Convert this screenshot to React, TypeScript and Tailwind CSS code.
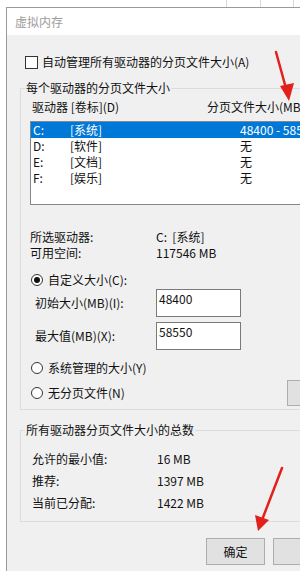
import React from 'react';

const font = { fontFamily: '"Noto Sans CJK SC", "Noto Sans", sans-serif' };

const drives = [
  { letter: 'C:', label: '[系统]', size: '48400 - 58550', selected: true },
  { letter: 'D:', label: '[软件]', size: '无', selected: false },
  { letter: 'E:', label: '[文档]', size: '无', selected: false },
  { letter: 'F:', label: '[娱乐]', size: '无', selected: false },
];

const Radio: React.FC<{ checked?: boolean }> = ({ checked }) => (
  <span className="w-[12px] h-[12px] rounded-full border border-[#333] bg-white flex items-center justify-center shrink-0">
    {checked && <span className="w-[6px] h-[6px] rounded-full bg-[#111]" />}
  </span>
);

export default function App() {
  return (
    <div className="relative w-[300px] h-[571px] overflow-hidden bg-white text-[12px] leading-[16px] text-[#111]" style={font}>
      {/* 背景の表の罫線 */}
      <div className="h-[7px] flex">
        <div className="w-[226px]" />
        <div className="w-[34px] border-l border-[#d8d8d8]" />
        <div className="w-[33px] border-l border-[#d8d8d8]" />
        <div className="w-[7px] border-l border-[#d8d8d8]" />
      </div>

      <div className="ml-[6px] w-[320px] border-l border-t border-[#9a9a9a]">
        {/* タイトルバー */}
        <div className="h-[27px] bg-white pl-[8px] pt-[1px] flex items-center text-[#9b9b9b]">虚拟内存</div>

        <div className="h-[536px] bg-[#f0f0f0] pt-[19px]">
          <div className="flex items-center pl-[18px] h-[16px]">
            <span className="w-[13px] h-[13px] border border-[#333] bg-white shrink-0" />
            <span className="ml-[4px] whitespace-nowrap">自动管理所有驱动器的分页文件大小(A)</span>
          </div>

          <fieldset className="mt-[10px] ml-[13px] w-[300px] border border-[#dcdcdc] pl-[4px] pb-[3px]">
            <legend className="px-[1px] leading-[16px]">每个驱动器的分页文件大小</legend>

            <div className="mt-[3px] h-[16px] flex whitespace-nowrap">
              <span className="ml-[7px] w-[175px]">驱动器 [卷标](D)</span>
              <span>分页文件大小(MB)</span>
            </div>

            <div className="mt-[6px] ml-[5px] w-[290px] h-[84px] border border-[#828790] bg-white">
              {drives.map((d) => (
                <div
                  key={d.letter}
                  className={`h-[16px] flex pl-[2px] whitespace-nowrap ${d.selected ? 'bg-[#0078d7] text-white' : ''}`}
                >
                  <span className="w-[37px]">{d.letter}</span>
                  <span className="w-[170px]">{d.label}</span>
                  <span>{d.size}</span>
                </div>
              ))}
            </div>

            <div className="mt-[24px] ml-[5px]">
              <div className="h-[16px] flex">
                <span className="w-[126px]">所选驱动器:</span>
                <span>C:&nbsp;&nbsp;[系统]</span>
              </div>
              <div className="h-[16px] flex">
                <span className="w-[126px]">可用空间:</span>
                <span>117546 MB</span>
              </div>
            </div>

            <div className="mt-[11px] ml-[6px] h-[16px] flex items-center">
              <Radio checked />
              <span className="ml-[5px]">自定义大小(C):</span>
            </div>

            <div className="mt-[1px] ml-[10px] flex items-center">
              <span className="w-[121px]">初始大小(MB)(I):</span>
              <div className="w-[85px] h-[28px] border border-[#7a7a7a] bg-white pl-[2px] pt-[1px]">48400</div>
            </div>

            <div className="mt-[5px] ml-[10px] flex items-center">
              <span className="w-[121px]">最大值(MB)(X):</span>
              <div className="w-[85px] h-[28px] border border-[#7a7a7a] bg-white pl-[2px] pt-[1px]">58550</div>
            </div>

            <div className="mt-[10px] ml-[6px] h-[16px] flex items-center">
              <Radio />
              <span className="ml-[5px]">系统管理的大小(Y)</span>
            </div>

            <div className="mt-[4px] h-[26px] flex items-center">
              <div className="w-[262px] flex items-center pl-[6px]">
                <Radio />
                <span className="ml-[5px]">无分页文件(N)</span>
              </div>
              <div className="w-[75px] h-[26px] border border-[#adadad] bg-[#e1e1e1]" />
            </div>
          </fieldset>

          <fieldset className="mt-[12px] ml-[13px] w-[300px] border border-[#dcdcdc] pl-[4px] pb-[7px]">
            <legend className="px-[1px] leading-[16px]">所有驱动器分页文件大小的总数</legend>
            <div className="mt-[10px] ml-[7px]">
              {[
                ['允许的最小值:', '16 MB'],
                ['推荐:', '1397 MB'],
                ['当前已分配:', '1422 MB'],
              ].map(([k, v]) => (
                <div key={k} className="h-[22px] flex items-center">
                  <span className="w-[125px]">{k}</span>
                  <span>{v}</span>
                </div>
              ))}
            </div>
          </fieldset>

          <div className="mt-[16px] ml-[199px] flex gap-[8px]">
            <div className="w-[83px] h-[27px] border border-[#adadad] bg-[#e1e1e1] flex items-center justify-center">确定</div>
            <div className="w-[75px] h-[27px] border border-[#adadad] bg-[#e1e1e1]" />
          </div>
        </div>
      </div>

      {/* 赤い矢印 */}
      <svg className="absolute inset-0 pointer-events-none" width="300" height="571" viewBox="0 0 300 571">
        <line x1="276" y1="52" x2="287" y2="92" stroke="#e3211c" strokeWidth="2.5" strokeLinecap="round" />
        <polygon points="289,101 280,86 294,83" fill="#e3211c" />
        <line x1="282" y1="468" x2="262" y2="520" stroke="#e3211c" strokeWidth="2.5" strokeLinecap="round" />
        <polygon points="258,531 255,515 269,520" fill="#e3211c" />
      </svg>
    </div>
  );
}
